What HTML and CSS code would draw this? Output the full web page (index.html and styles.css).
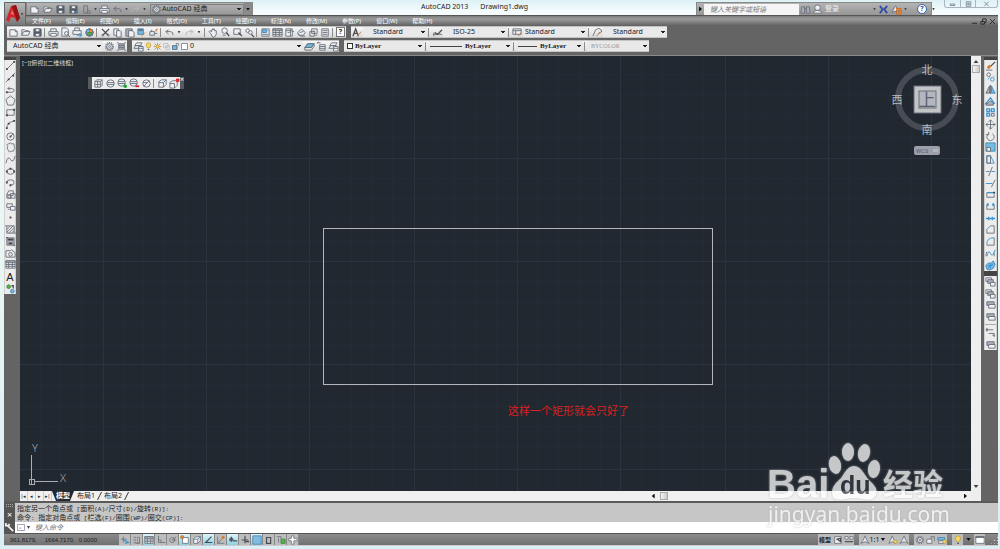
FILE: index.html
```
<!DOCTYPE html>
<html lang="zh-CN">
<head>
  <meta charset="UTF-8">
  <meta name="viewport" content="width=device-width, initial-scale=1.0">
  <title>AutoCAD 2013 - Drawing1.dwg</title>
  <link rel="stylesheet" href="styles.css">
</head>
<body>
  <!-- icon sprite -->
  <svg class="sprite" aria-hidden="true">
    <symbol id="new" viewBox="0 0 12 12"><path class="paper" d="M2 3h6l2 2v5H2z"/><path d="M8 3v2h2"/></symbol>
    <symbol id="open" viewBox="0 0 12 12"><path class="paper" d="M2 9V3h3l1 1h3v2"/><path class="paper" d="M2 9l2-4h7L9 9z"/></symbol>
    <symbol id="save" viewBox="0 0 12 12"><path class="dark" d="M2 2h8v8H2z"/><path class="white" d="M4 2h4v3H4zM4 7h4v3H4z"/></symbol>
    <symbol id="saveas" viewBox="0 0 12 12"><path class="dark" d="M2 2h8v8H2z"/><path class="white" d="M4 2h4v3H4zM4 7h3v3H4z"/><path class="blue" d="M7 10l4-4"/></symbol>
    <symbol id="web" viewBox="0 0 12 12"><path d="M3 2h4v8H3zM7 6l3 2v2H7"/></symbol>
    <symbol id="print" viewBox="0 0 12 12"><path class="paper" d="M3 5V2h6v3"/><path class="paper" d="M1 5h10v4H1z"/><path class="white" d="M3 7h6v3H3z"/></symbol>
    <symbol id="preview" viewBox="0 0 12 12"><path class="paper" d="M2 1h5l2 2v7H2z"/><circle class="paper" cx="7" cy="7" r="2"/><path d="M8 8l3 3"/></symbol>
    <symbol id="publish" viewBox="0 0 12 12"><path class="paper" d="M3 4V1h5v3M1 4h9v4H1z"/><path class="blue" d="M5 9h5M8 7l3 2-3 2"/></symbol>
    <symbol id="cube" viewBox="0 0 12 12"><circle class="bluefill" cx="6" cy="6" r="4"/><path class="orangefill" d="M6 2a4 4 0 0 1 4 4H6z"/><path class="greenfill" d="M4 6h4v3H4z"/><circle cx="6" cy="6" r="4"/></symbol>
    <symbol id="cut" viewBox="0 0 12 12"><path class="thick" d="M2 2l7 7M10 2L3 9"/><circle cx="3" cy="9" r="1"/><circle cx="9" cy="9" r="1"/></symbol>
    <symbol id="copy" viewBox="0 0 12 12"><path class="paper" d="M2 2h5v7H2z"/><path class="paper" d="M5 4h4l1 1v6H5z"/></symbol>
    <symbol id="paste" viewBox="0 0 12 12"><path class="gray" d="M2 2h7v8H2z"/><path class="paper" d="M5 4h4l2 2v5H5z"/></symbol>
    <symbol id="match" viewBox="0 0 12 12"><path class="bluefill" d="M2 2h6v6H2z"/><path class="dark" d="M3 3h4v1H3z"/><path class="orange" d="M6 10l4-4"/></symbol>
    <symbol id="blockedit" viewBox="0 0 12 12"><path d="M2 9V5h5v4zM4 5V3M7 7h3"/><path class="orange" d="M8 4l3-2M9 2v3"/></symbol>
    <symbol id="undo" viewBox="0 0 12 12"><path d="M5 3L2 5l3 3M2 5h5q3 0 3 4"/></symbol>
    <symbol id="redo" viewBox="0 0 12 12"><path class="faint" d="M7 3l3 2-3 3M10 5H5Q2 5 2 9"/></symbol>
    <symbol id="pan" viewBox="0 0 12 12"><path class="paper" d="M3 7L1 5l1-1 2 1V3h1V2h1v1l1-1v2h2v4l-2 3H5z"/></symbol>
    <symbol id="zoomrt" viewBox="0 0 12 12"><circle class="paper" cx="5" cy="4" r="3"/><path class="thick" d="M7 6l3 4"/><path d="M3 9h3"/></symbol>
    <symbol id="zoomwin" viewBox="0 0 12 12"><path class="paper" d="M2 2h7v6H2z"/><path class="thick" d="M7 6l4 4"/></symbol>
    <symbol id="zoomprev" viewBox="0 0 12 12"><circle class="paper" cx="4" cy="4" r="2"/><circle class="paper" cx="7" cy="6" r="2"/><path class="thick" d="M8 8l3 3"/></symbol>
    <symbol id="props" viewBox="0 0 12 12"><path class="paper" d="M2 2h8v8H2z"/><path class="bluefill" d="M3 3h4v3H3z"/><path d="M3 8h6M8 4h1"/></symbol>
    <symbol id="table" viewBox="0 0 12 12"><path class="paper" d="M1 2h10v8H1z"/><path class="gray" d="M1 2h10v2H1z"/><path d="M1 6h10M1 8h10M4 4v6M8 4v6"/></symbol>
    <symbol id="palette" viewBox="0 0 12 12"><path class="paper" d="M2 2h7v8H2z"/><path d="M7 2v8M2 4h7M9 5h2M4 6h2"/></symbol>
    <symbol id="sheet" viewBox="0 0 12 12"><path class="paper" d="M2 6l4-4 4 4-2 3H3z"/><path d="M2 7l3 3h5M4 6l4-1"/></symbol>
    <symbol id="markup" viewBox="0 0 12 12"><path class="paper" d="M4 2h6v5H4z"/><path d="M2 5h5v5H2zM8 9h2M6 4l2 1"/></symbol>
    <symbol id="calc" viewBox="0 0 12 12"><path class="paper" d="M2 2h7v8H2z"/><path d="M3 4h5M3 6h5M3 8h5"/></symbol>
    <symbol id="textstyle" viewBox="0 0 12 12"><path class="thick" d="M1 10l3-8 3 8M2 7h4"/><path class="orange" d="M6 10l4-5"/></symbol>
    <symbol id="dimstyle" viewBox="0 0 12 12"><path d="M1 8h10M2 6v4"/><path class="thick" d="M3 6l3 2 5-5"/><path class="orange" d="M7 8l2-2"/></symbol>
    <symbol id="tablestyle" viewBox="0 0 12 12"><path class="paper" d="M1 2h9v6H1z"/><path d="M1 4h9M4 4v4"/><path class="orange" d="M7 10l3-4"/></symbol>
    <symbol id="leader" viewBox="0 0 12 12"><path d="M1 10l3-7q4-3 6 0T7 7"/><path class="orange" d="M5 10l4-5"/></symbol>
    <symbol id="gear" viewBox="0 0 12 12"><circle class="dots" cx="6" cy="6" r="4"/><circle class="paper" cx="6" cy="6" r="3"/><circle cx="6" cy="6" r="1"/></symbol>
    <symbol id="wsset" viewBox="0 0 12 12"><path class="gray" d="M3 3h6v6H3z"/><path d="M1 2h2M1 10h2M9 2h2M9 10h2M3 5h6M3 7h6"/></symbol>
    <symbol id="layers" viewBox="0 0 12 12"><path class="paper" d="M1 8l2-3h6L7 8zM2 5l2-3h6L8 5z"/><path class="paper" d="M6 6h5v5H6z"/><path d="M6 8h5"/></symbol>
    <symbol id="bulb" viewBox="0 0 12 12"><path class="yellow" d="M3 4a3 3 0 0 1 6 0q0 2-2 4H5Q3 6 3 4z"/><path class="thick" d="M5 10h2"/></symbol>
    <symbol id="sun" viewBox="0 0 12 12"><path class="orange" d="M6 1v10M1 6h10M2 2l8 8M10 2l-8 8"/><circle class="yellow" cx="6" cy="6" r="2"/></symbol>
    <symbol id="freeze" viewBox="0 0 12 12"><path class="faint" d="M2 2h6v5H2zM5 5h5v5H5z"/></symbol>
    <symbol id="lock" viewBox="0 0 12 12"><path class="bluefill" d="M2 5h6v5H2z"/><path d="M2 5h6v5H2zM7 5V2h3v3"/></symbol>
    <symbol id="swatch" viewBox="0 0 12 12"><path class="white" d="M2 2h8v8H2z"/></symbol>
    <symbol id="laycur" viewBox="0 0 12 12"><path class="bluefill" d="M1 7l3-4h7L8 7z"/><path d="M1 7v3h7l3-4V3H4L1 7h7l3-4"/></symbol>
    <symbol id="layprev" viewBox="0 0 12 12"><path class="paper" d="M4 4h6v6H4z"/><path d="M4 6h6M4 8h6M1 2h4M1 2l2-1"/></symbol>
    <symbol id="line" viewBox="0 0 12 12"><path d="M2 10l8-8"/><path class="dot" d="M1 9h2v2H1zM9 1h2v2H9z"/></symbol>
    <symbol id="xline" viewBox="0 0 12 12"><path d="M1 11L11 1"/><path class="dot" d="M3 7h2v2H3zM8 3h2v2H8z"/></symbol>
    <symbol id="pline" viewBox="0 0 12 12"><path d="M2 9h5q3 0 3-2T7 5H3M5 3L3 5l2 1"/><path class="dot" d="M1 8h2v2H1z"/></symbol>
    <symbol id="polygon" viewBox="0 0 12 12"><path d="M6 1l5 4-2 6H3L1 5z"/></symbol>
    <symbol id="rect" viewBox="0 0 12 12"><path d="M2 3h8v6H2z"/><path class="dot" d="M1 8h2v2H1zM9 2h2v2H9z"/></symbol>
    <symbol id="arc" viewBox="0 0 12 12"><path d="M2 10q0-6 8-8"/><path class="dot" d="M1 9h2v2H1zM9 1h2v2H9zM3 4h2v2H3z"/></symbol>
    <symbol id="circle" viewBox="0 0 12 12"><circle cx="6" cy="6" r="4"/><path d="M6 6l3-3"/><path class="dot" d="M5 5h2v2H5z"/></symbol>
    <symbol id="cloud" viewBox="0 0 12 12"><path d="M3 5q-2-3 1-3 2-2 3 0 4-1 3 3 2 2 0 3 0 3-3 2-3 2-3-1-3-1-1-4z"/></symbol>
    <symbol id="spline" viewBox="0 0 12 12"><path d="M1 10Q3 1 6 6t5-4"/></symbol>
    <symbol id="ellipse" viewBox="0 0 12 12"><ellipse cx="6" cy="6" rx="4" ry="3"/><path class="dot" d="M1 5h2v2H1zM9 5h2v2H9zM5 2h2v2H5z"/></symbol>
    <symbol id="earc" viewBox="0 0 12 12"><path d="M2 6q0-3 4-3t4 3-4 3"/><path class="dot" d="M5 8h2v2H5zM1 5h2v2H1z"/></symbol>
    <symbol id="insert" viewBox="0 0 12 12"><path d="M2 6l2-4h5v5H5zM6 5h5v5H6zM2 6v4h5"/><circle cx="5" cy="8" r="2"/></symbol>
    <symbol id="block" viewBox="0 0 12 12"><path d="M2 3h6v4H2z"/><path class="paper" d="M6 6h5v4H6z"/><path d="M3 9h2"/></symbol>
    <symbol id="point" viewBox="0 0 12 12"><path class="dot" d="M5 5h2v2H5z"/></symbol>
    <symbol id="hatch" viewBox="0 0 12 12"><path d="M2 2h8v8H2zM2 6l4-4M2 9l7-7M4 10l6-6M7 10l3-3M1 1v2M11 9v2"/></symbol>
    <symbol id="gradient" viewBox="0 0 12 12"><path class="gray" d="M2 2h8v8H2z"/><path class="dot" d="M3 3h6v2H3zM4 7h4v2H4zM1 1h2v1H1zM9 10h2v1H9z"/></symbol>
    <symbol id="region" viewBox="0 0 12 12"><path d="M1 3h5l1-1 4 3v5H1z"/><circle cx="6" cy="7" r="2"/></symbol>
    <symbol id="addsel" viewBox="0 0 12 12"><circle class="greenfill" cx="4" cy="4" r="2"/><path class="thick" d="M7 3h2v3"/><circle class="bluefill" cx="8" cy="9" r="2"/></symbol>
    <symbol id="erase" viewBox="0 0 12 12"><path class="thick" d="M6 7l5-5"/><path class="orange wide" d="M3 9l3-3"/><path d="M1 11h7"/></symbol>
    <symbol id="mcopy" viewBox="0 0 12 12"><circle cx="4" cy="3" r="2"/><circle class="blue" cx="8" cy="8" r="2"/><path class="blue" d="M3 8l2-2M9 4l1 1"/></symbol>
    <symbol id="mirror" viewBox="0 0 12 12"><path class="gray" d="M5 2v8H1z"/><path class="bluefill" d="M7 2v8h4z"/><path d="M6 1v10"/></symbol>
    <symbol id="offset" viewBox="0 0 12 12"><path class="blue thick" d="M1 8l5-6 4 6z"/><path class="gray" d="M3 8l3-3 3 3v2H1V8z"/></symbol>
    <symbol id="array" viewBox="0 0 12 12"><path class="blue thick" d="M2 2h3v3H2zM7 2h3v3H7zM2 7h3v3H2z"/><path d="M7 7h3v3H7z"/></symbol>
    <symbol id="move" viewBox="0 0 12 12"><path d="M6 1v10M1 6h10M4 3l2-2 2 2M4 9l2 2 2-2M3 4L1 6l2 2M9 4l2 2-2 2"/></symbol>
    <symbol id="rotate" viewBox="0 0 12 12"><path d="M8 3a4 4 0 1 1-4 0M4 1v3H1"/></symbol>
    <symbol id="scale" viewBox="0 0 12 12"><path class="bluefill" d="M1 1h10v9H1z"/><path class="paper" d="M2 6h4v4H2z"/></symbol>
    <symbol id="stretch" viewBox="0 0 12 12"><path class="blue" d="M6 2l4 8H2V2h4"/><path d="M2 2h4v8H2z"/></symbol>
    <symbol id="trim" viewBox="0 0 12 12"><path class="blue" d="M1 6h4M7 6h4"/><path d="M4 11l4-10"/></symbol>
    <symbol id="extend" viewBox="0 0 12 12"><path class="blue" d="M1 6h7"/><path d="M7 10l4-8"/></symbol>
    <symbol id="breakpt" viewBox="0 0 12 12"><path d="M2 4v5h8V6"/><path class="blue thick" d="M2 4h8"/><path class="dot" d="M9 3h2v2H9z"/></symbol>
    <symbol id="break" viewBox="0 0 12 12"><path d="M2 4v5h8V4"/><path class="blue wide" d="M2 4h2M8 4h2"/></symbol>
    <symbol id="join" viewBox="0 0 12 12"><path class="blue thick" d="M1 6h10M4 4v4M8 4v4"/></symbol>
    <symbol id="chamfer" viewBox="0 0 12 12"><path d="M2 10V6M6 2h4v8H2"/><path class="blue" d="M2 6l4-4"/></symbol>
    <symbol id="fillet" viewBox="0 0 12 12"><path d="M2 10V9M9 2h1v8H2"/><path class="blue" d="M2 9q0-7 7-7"/></symbol>
    <symbol id="blend" viewBox="0 0 12 12"><path class="blue" d="M2 9q2-8 4-3t5-4"/><path d="M1 9q0-3 1-5M10 9V5"/></symbol>
    <symbol id="explode" viewBox="0 0 12 12"><path class="bluefill" d="M1 6l3-3 2 1 3-3 2 4-2 4-4 2-3-1z"/><path class="blue" d="M3 6h5M6 3v6M3 9l6-5"/></symbol>
    <symbol id="front" viewBox="0 0 12 12"><path class="paper" d="M1 2h6v4H1z"/><path class="gray" d="M3 4h6v4H3z"/><path class="paper" d="M6 7h5v4H6z"/></symbol>
    <symbol id="above" viewBox="0 0 12 12"><path class="gray" d="M2 3h8v4H2z"/><path class="paper" d="M4 6h7v4H4z"/></symbol>
    <symbol id="anno" viewBox="0 0 12 12"><path d="M2 1v4M1 3h8M3 2L1 3l2 1M4 7h6v4M8 9h3"/></symbol>
    <symbol id="mesh" viewBox="0 0 12 12"><path class="paper" d="M2 4l2-2h6v6l-2 2H2z"/><path d="M2 4h6v6M8 4l2-2M5 3v7M2 7h7"/></symbol>
    <symbol id="ball" viewBox="0 0 12 12"><circle class="paper" cx="6" cy="6" r="4"/><path d="M2 5h8M2 7h8"/></symbol>
    <symbol id="ballplus" viewBox="0 0 12 12"><circle class="paper" cx="5" cy="5" r="4"/><path d="M1 4h8M1 6h8"/><path class="green" d="M9 7v4M7 9h4"/></symbol>
    <symbol id="ballminus" viewBox="0 0 12 12"><circle class="paper" cx="5" cy="5" r="4"/><path d="M1 4h8M1 6h8"/><path class="red" d="M7 9h4"/></symbol>
    <symbol id="ballcut" viewBox="0 0 12 12"><circle class="paper" cx="6" cy="6" r="4"/><path d="M3 9l6-6M2 5h5"/></symbol>
    <symbol id="crease" viewBox="0 0 12 12"><path class="paper" d="M2 4l3-2h5v5l-3 3H2z"/><path d="M2 5h5v5M7 5l3-3"/><path class="blue" d="M7 5l3-3"/></symbol>
    <symbol id="uncrease" viewBox="0 0 12 12"><path class="paper" d="M1 5l3-2h5v5l-3 3H1z"/><path d="M1 6h5v5"/><path class="red" d="M8 1l3 3M11 1L8 4"/></symbol>
    <symbol id="binoc" viewBox="0 0 12 12"><path class="gray" d="M1 10l1-7h3v7zM7 10V3h3l1 7z"/><path d="M5 5h2"/></symbol>
    <symbol id="user" viewBox="0 0 12 12"><circle class="paper" cx="6" cy="4" r="3"/><path class="paper" d="M1 10q1-3 5-3t5 3z"/></symbol>
    <symbol id="exchange" viewBox="0 0 12 12"><path class="navy" d="M2 2l3 4-3 4M10 2L7 6l3 4"/><path class="white" d="M5 3l1 2 1-2"/></symbol>
    <symbol id="a360" viewBox="0 0 12 12"><path class="paper" d="M1 9l4-7 3 5z"/><path class="orangefill" d="M6 5h5v6H6z"/><path class="white" d="M8 7h1v2H8z"/></symbol>
    <symbol id="infer" viewBox="0 0 12 12"><path d="M4 2v7M1 5h7"/><path class="blue thick" d="M5 6l5 3-4 1"/></symbol>
    <symbol id="snap" viewBox="0 0 12 12"><path class="dots" d="M2 3h7M2 6h6M2 9h7"/><path d="M9 3v7H4"/></symbol>
    <symbol id="ortho" viewBox="0 0 12 12"><path d="M3 1v8h8M3 6h3v3"/></symbol>
    <symbol id="polar" viewBox="0 0 12 12"><circle cx="5" cy="6" r="3"/><path d="M5 6l5-4M5 6h5"/></symbol>
    <symbol id="osnap" viewBox="0 0 12 12"><path class="white" d="M3 3h7v7H3z"/><path class="orangefill" d="M1 1h3v3H1z"/></symbol>
    <symbol id="angle" viewBox="0 0 12 12"><path class="thick" d="M9 2L2 9h8"/></symbol>
    <symbol id="ducs" viewBox="0 0 12 12"><path d="M2 2v8h8M2 10l5-5"/><path class="orange wide" d="M7 4l3-2"/></symbol>
    <symbol id="plus" viewBox="0 0 12 12"><path class="thick" d="M6 1v9M2 6h8M7 8h4"/></symbol>
    <symbol id="dyn" viewBox="0 0 12 12"><path class="dark" d="M2 4h4v3H2z"/><path class="thick" d="M4 2v6M6 7h5"/></symbol>
    <symbol id="tpy" viewBox="0 0 12 12"><path class="bluefill" d="M1 1h10v10H1z"/><path class="dots faint" d="M2 3h8M2 6h8M2 9h8"/></symbol>
    <symbol id="qp" viewBox="0 0 12 12"><path class="thick" d="M3 3h5v7H3z"/></symbol>
    <symbol id="sc" viewBox="0 0 12 12"><path d="M1 2h5v3M3 4v5"/><path class="greenfill" d="M6 5h5v5H6z"/></symbol>
    <symbol id="am" viewBox="0 0 12 12"><path class="white" d="M4 1h3v3h4v3H7v4H4V7H1V4h3z"/></symbol>
    <symbol id="layout" viewBox="0 0 12 12"><path class="paper" d="M2 2h8v8H2z"/><path class="thick" d="M5 5l4-1v4z"/></symbol>
    <symbol id="quick" viewBox="0 0 12 12"><path class="paper" d="M1 2h4v3H1zM7 2h4v3H7z"/><path class="thick" d="M1 8h10"/></symbol>
    <symbol id="scaleicon" viewBox="0 0 12 12"><path class="paper" d="M6 1l2 5 3 4-5-2-5 2 3-4z"/></symbol>
    <symbol id="annovis" viewBox="0 0 12 12"><path class="paper" d="M5 1l2 5 2 4-4-2-4 2 2-4z"/><circle class="yellow" cx="9" cy="8" r="2"/></symbol>
    <symbol id="padlock" viewBox="0 0 12 12"><path class="paper" d="M1 5h6v5H1z"/><path d="M6 5V2h4v5"/></symbol>
    <symbol id="hardware" viewBox="0 0 12 12"><path class="bluefill" d="M1 3h8v3H1z"/><path class="paper" d="M2 7h6v3H2z"/><circle class="yellow" cx="9" cy="8" r="2"/></symbol>
    <symbol id="clean" viewBox="0 0 12 12"><path class="white" d="M1 2h10v8H1z"/><path class="dark" d="M1 2h10v1H1z"/></symbol>
    <symbol id="wrench" viewBox="0 0 12 12"><path class="light" d="M4 4l6 6"/><path class="light" d="M2 1v3h3l1-2"/></symbol>
  </svg>

  <div class="window">
    <header class="header">
      <button class="app-button" aria-label="应用程序">
        <svg class="app-logo" viewBox="0 0 14 18"><path fill="#d3262b" d="M0 15L5 1l5-1 4 13-3 4-2-4-4-1-2 5z"/><path fill="#8d1417" d="M6 1l4-1 4 13-3 4-3-10z"/><path fill="#f0787a" d="M5 9l1-4 2 5z"/></svg>
        <i class="caret"></i>
      </button>
      <div class="header-main">
        <div class="titlebar">
          <div class="quick-access">
            <button aria-label="新建"><svg><use href="#new"/></svg></button>
            <button aria-label="打开"><svg><use href="#open"/></svg></button>
            <button aria-label="保存"><svg><use href="#save"/></svg></button>
            <button aria-label="另存为"><svg><use href="#saveas"/></svg></button>
            <button aria-label="Web"><svg><use href="#web"/></svg></button>
            <i class="caret"></i>
            <button aria-label="打印"><svg><use href="#print"/></svg></button>
            <button aria-label="放弃"><svg><use href="#undo"/></svg></button>
            <i class="caret"></i>
            <button aria-label="重做"><svg><use href="#redo"/></svg></button>
            <i class="caret"></i>
            <label class="workspace"><svg><use href="#gear"/></svg>
              <select aria-label="工作空间"><option>AutoCAD 经典</option></select>
            </label>
            <button class="more" aria-label="自定义"><i class="caret dark-caret"></i></button>
          </div>
          <h1 class="title"><span>AutoCAD 2013</span><span>Drawing1.dwg</span></h1>
          <div class="infocenter">
            <button class="expand" aria-label="展开"><i class="caret right"></i></button>
            <input type="search" aria-label="搜索" placeholder="键入关键字或短语">
            <button aria-label="查找"><svg><use href="#binoc"/></svg></button>
            <button class="login"><svg><use href="#user"/></svg>登录</button>
            <i class="caret"></i>
            <button aria-label="Exchange"><svg><use href="#exchange"/></svg></button>
            <button aria-label="在线"><svg><use href="#a360"/></svg></button>
            <i class="caret"></i>
            <button class="help-button">?</button>
            <i class="caret"></i>
          </div>
          <div class="window-controls">
            <button aria-label="最小化"><svg viewBox="0 0 8 8"><path d="M1 4h6v2H1z"/></svg></button>
            <button aria-label="最大化"><svg viewBox="0 0 8 8"><path d="M1 1h6v6H1zM3 3h2v2H3z"/></svg></button>
            <button aria-label="关闭"><svg viewBox="0 0 8 8"><path d="M1 1l6 6M7 1L1 7"/></svg></button>
          </div>
        </div>
        <nav class="menubar">
          <a href="#">文件(F)</a>
          <a href="#">编辑(E)</a>
          <a href="#">视图(V)</a>
          <a href="#">插入(I)</a>
          <a href="#">格式(O)</a>
          <a href="#">工具(T)</a>
          <a href="#">绘图(D)</a>
          <a href="#">标注(N)</a>
          <a href="#">修改(M)</a>
          <a href="#">参数(P)</a>
          <a href="#">窗口(W)</a>
          <a href="#">帮助(H)</a>
          <div class="doc-controls">
            <button aria-label="最小化"><svg viewBox="0 0 8 8"><path d="M1 6h6"/></svg></button>
            <button aria-label="还原"><svg viewBox="0 0 8 8"><path d="M1 4h4v3H1zM3 4V1h4v4H5"/></svg></button>
            <button aria-label="关闭"><svg viewBox="0 0 8 8"><path d="M1 1l6 6M7 1L1 7"/></svg></button>
          </div>
        </nav>
      </div>
    </header>

    <div class="toolbars">
      <div class="toolbar-row">
        <div class="toolbar">
          <button aria-label="新建"><svg><use href="#new"/></svg></button>
          <button aria-label="打开"><svg><use href="#open"/></svg></button>
          <button aria-label="保存"><svg><use href="#save"/></svg></button>
          <i class="sep"></i>
          <button aria-label="打印"><svg><use href="#print"/></svg></button>
          <button aria-label="打印预览"><svg><use href="#preview"/></svg></button>
          <button aria-label="发布"><svg><use href="#publish"/></svg></button>
          <button aria-label="三维DWF"><svg><use href="#cube"/></svg></button>
          <i class="sep"></i>
          <button aria-label="剪切"><svg><use href="#cut"/></svg></button>
          <button aria-label="复制"><svg><use href="#copy"/></svg></button>
          <button aria-label="粘贴"><svg><use href="#paste"/></svg></button>
          <button aria-label="特性匹配"><svg><use href="#match"/></svg></button>
          <button aria-label="块编辑器"><svg><use href="#blockedit"/></svg></button>
          <i class="sep"></i>
          <button aria-label="放弃"><svg><use href="#undo"/></svg></button>
          <i class="caret wide-caret"></i>
          <button aria-label="重做"><svg><use href="#redo"/></svg></button>
          <i class="caret wide-caret"></i>
          <i class="sep"></i>
          <button aria-label="平移"><svg><use href="#pan"/></svg></button>
          <button aria-label="实时缩放"><svg><use href="#zoomrt"/></svg></button>
          <button aria-label="窗口缩放"><svg><use href="#zoomwin"/></svg></button>
          <button aria-label="缩放上一个"><svg><use href="#zoomprev"/></svg></button>
          <i class="sep"></i>
          <button aria-label="特性"><svg><use href="#props"/></svg></button>
          <button aria-label="设计中心"><svg><use href="#table"/></svg></button>
          <button aria-label="工具选项板"><svg><use href="#palette"/></svg></button>
          <button aria-label="图纸集"><svg><use href="#sheet"/></svg></button>
          <button aria-label="标记集"><svg><use href="#markup"/></svg></button>
          <button aria-label="计算器"><svg><use href="#calc"/></svg></button>
          <i class="sep"></i>
          <button class="boxed">?</button>
        </div>
        <div class="toolbar styles-bar">
          <button aria-label="文字样式"><svg><use href="#textstyle"/></svg></button>
          <select class="indent" aria-label="文字样式"><option>Standard</option></select>
          <i class="sep"></i>
          <button aria-label="标注样式"><svg><use href="#dimstyle"/></svg></button>
          <select class="indent" aria-label="标注样式"><option>ISO-25</option></select>
          <i class="sep"></i>
          <button aria-label="表格样式"><svg><use href="#tablestyle"/></svg></button>
          <select aria-label="表格样式"><option>Standard</option></select>
          <i class="sep"></i>
          <button aria-label="多重引线样式"><svg><use href="#leader"/></svg></button>
          <select class="indent" aria-label="多重引线样式"><option>Standard</option></select>
        </div>
      </div>
      <div class="toolbar-row">
        <div class="toolbar">
          <select class="workspace-select" aria-label="工作空间"><option>AutoCAD 经典</option></select>
          <button aria-label="工作空间设置"><svg><use href="#gear"/></svg></button>
          <button aria-label="我的工作空间"><svg><use href="#wsset"/></svg></button>
        </div>
        <div class="toolbar">
          <button aria-label="图层特性"><svg><use href="#layers"/></svg></button>
          <label class="layer-combo">
            <svg><use href="#bulb"/></svg><svg><use href="#sun"/></svg><svg><use href="#freeze"/></svg><svg><use href="#lock"/></svg><svg><use href="#swatch"/></svg>
            <select aria-label="图层"><option>0</option></select>
          </label>
          <button aria-label="置为当前"><svg><use href="#laycur"/></svg></button>
          <button aria-label="上一个图层"><svg><use href="#layprev"/></svg></button>
          <button aria-label="图层状态"><svg><use href="#layers"/></svg></button>
        </div>
        <div class="toolbar props-bar">
          <label class="color-combo"><i class="color-box"></i><select aria-label="颜色"><option>ByLayer</option></select></label>
          <i class="sep"></i>
          <label class="linetype-combo"><i class="stroke"></i><select aria-label="线型"><option>ByLayer</option></select></label>
          <i class="sep"></i>
          <label class="weight-combo"><i class="stroke"></i><select aria-label="线宽"><option>ByLayer</option></select></label>
          <i class="sep"></i>
          <select class="plot-select" aria-label="打印样式" disabled><option>BYCOLOR</option></select>
        </div>
      </div>
    </div>

    <main class="workarea">
      <aside class="side draw-side">
        <i class="grip"></i>
        <div class="palette draw-palette">
          <button aria-label="直线"><svg><use href="#line"/></svg></button>
          <button aria-label="构造线"><svg><use href="#xline"/></svg></button>
          <button aria-label="多段线"><svg><use href="#pline"/></svg></button>
          <button aria-label="多边形"><svg><use href="#polygon"/></svg></button>
          <button aria-label="矩形"><svg><use href="#rect"/></svg></button>
          <button aria-label="圆弧"><svg><use href="#arc"/></svg></button>
          <button aria-label="圆"><svg><use href="#circle"/></svg></button>
          <button aria-label="修订云线"><svg><use href="#cloud"/></svg></button>
          <button aria-label="样条曲线"><svg><use href="#spline"/></svg></button>
          <button aria-label="椭圆"><svg><use href="#ellipse"/></svg></button>
          <button aria-label="椭圆弧"><svg><use href="#earc"/></svg></button>
          <button aria-label="插入块"><svg><use href="#insert"/></svg></button>
          <button aria-label="创建块"><svg><use href="#block"/></svg></button>
          <button aria-label="点"><svg><use href="#point"/></svg></button>
          <button aria-label="图案填充"><svg><use href="#hatch"/></svg></button>
          <button aria-label="渐变色"><svg><use href="#gradient"/></svg></button>
          <button aria-label="面域"><svg><use href="#region"/></svg></button>
          <button aria-label="表格"><svg><use href="#table"/></svg></button>
          <button class="mtext">A</button>
          <button aria-label="添加选定对象"><svg><use href="#addsel"/></svg></button>
        </div>
      </aside>

      <section class="document">
        <div class="canvas">
          <svg class="drawing">
            <defs>
              <pattern id="grid" x="82" y="101" width="311" height="311" patternUnits="userSpaceOnUse">
                <path class="minor" d="M21 0v311M41 0v311M62 0v311M83 0v311M124 0v311M145 0v311M166 0v311M187 0v311M228 0v311M249 0v311M269 0v311M290 0v311M0 21h311M0 41h311M0 62h311M0 83h311M0 124h311M0 145h311M0 166h311M0 187h311M0 228h311M0 249h311M0 269h311M0 290h311"/>
                <path class="major" d="M1 0v311M104 0v311M207 0v311M0 1h311M0 104h311M0 207h311"/>
              </pattern>
            </defs>
            <rect width="100%" height="100%" fill="url(#grid)"/>
            <rect class="shape" x="303" y="172" width="389" height="156"/>
          </svg>
          <p class="view-label">[−][俯视][二维线框]</p>
          <div class="mesh-toolbar">
            <i class="handle"></i>
            <button aria-label="网格"><svg><use href="#mesh"/></svg></button>
            <button aria-label="平滑对象"><svg><use href="#ball"/></svg></button>
            <button aria-label="提高平滑度"><svg><use href="#ballplus"/></svg></button>
            <button aria-label="降低平滑度"><svg><use href="#ballminus"/></svg></button>
            <button aria-label="优化网格"><svg><use href="#ballcut"/></svg></button>
            <i class="sep"></i>
            <button aria-label="添加锐化"><svg><use href="#crease"/></svg></button>
            <button aria-label="删除锐化"><svg><use href="#uncrease"/></svg></button>
            <button class="close" aria-label="关闭">×</button>
          </div>
          <div class="viewcube">
            <svg viewBox="0 0 76 84">
              <circle cx="38" cy="39" r="29" fill="none" stroke="#464b54" stroke-width="6"/>
              <rect x="25" y="26" width="27" height="27" fill="#c3c4c5"/>
              <rect x="30" y="31" width="17" height="17" fill="#b2b6be"/>
              <text class="cube-face" x="38" y="46">上</text>
              <text x="38" y="14">北</text>
              <text x="8" y="44">西</text>
              <text x="68" y="44">东</text>
              <text x="38" y="74">南</text>
            </svg>
            <button class="wcs">WCS<i></i></button>
          </div>
          <p class="note">这样一个矩形就会只好了</p>
          <svg class="ucs" viewBox="0 0 44 52">
            <path d="M5 19v29M8 45h24M3 43h5v5H3z"/>
            <text x="6" y="16">Y</text>
            <text x="34" y="46">X</text>
          </svg>
        </div>
        <div class="vscroll">
          <i class="caret up"></i>
          <i class="thumb"></i>
          <i class="caret down"></i>
        </div>
        <div class="layout-row">
          <div class="tab-nav">
            <button>|◂</button><button>◂</button><button>▸</button><button>▸|</button>
          </div>
          <button class="tab active">模型</button>
          <button class="tab">布局1</button><i class="slash"></i>
          <button class="tab">布局2</button><i class="slash"></i>
          <div class="hscroll">
            <i class="caret left"></i>
            <i class="thumb"></i>
            <i class="caret right"></i>
          </div>
        </div>
      </section>

      <aside class="side modify-side">
        <i class="grip"></i>
        <div class="palette modify-palette">
          <button aria-label="删除"><svg><use href="#erase"/></svg></button>
          <button aria-label="复制"><svg><use href="#mcopy"/></svg></button>
          <button aria-label="镜像"><svg><use href="#mirror"/></svg></button>
          <button aria-label="偏移"><svg><use href="#offset"/></svg></button>
          <button aria-label="阵列"><svg><use href="#array"/></svg></button>
          <button aria-label="移动"><svg><use href="#move"/></svg></button>
          <button aria-label="旋转"><svg><use href="#rotate"/></svg></button>
          <button aria-label="缩放"><svg><use href="#scale"/></svg></button>
          <button aria-label="拉伸"><svg><use href="#stretch"/></svg></button>
          <button aria-label="修剪"><svg><use href="#trim"/></svg></button>
          <button aria-label="延伸"><svg><use href="#extend"/></svg></button>
          <button aria-label="打断于点"><svg><use href="#breakpt"/></svg></button>
          <button aria-label="打断"><svg><use href="#break"/></svg></button>
          <button aria-label="合并"><svg><use href="#join"/></svg></button>
          <button aria-label="倒角"><svg><use href="#chamfer"/></svg></button>
          <button aria-label="圆角"><svg><use href="#fillet"/></svg></button>
          <button aria-label="光顺曲线"><svg><use href="#blend"/></svg></button>
          <button aria-label="分解"><svg><use href="#explode"/></svg></button>
        </div>
        <i class="grip second"></i>
        <div class="palette order-palette">
          <button aria-label="前置"><svg><use href="#front"/></svg></button>
          <button aria-label="后置"><svg><use href="#front"/></svg></button>
          <button aria-label="置于对象之上"><svg><use href="#above"/></svg></button>
          <button aria-label="置于对象之下"><svg><use href="#above"/></svg></button>
          <i class="hsep"></i>
          <button aria-label="注释前置"><svg><use href="#anno"/></svg></button>
          <button aria-label="图案填充后置"><svg><use href="#above"/></svg></button>
        </div>
      </aside>
    </main>

    <section class="command">
      <div class="command-handle">
        <i class="handle-dots"></i>
        <button aria-label="关闭">×</button>
        <button aria-label="自定义"><svg><use href="#wrench"/></svg></button>
      </div>
      <div class="command-body">
        <div class="history">
          <p>指定另一个角点或<code> [</code>面积<code>(A)/</code>尺寸<code>(D)/</code>旋转<code>(R)]:</code></p>
          <p>命令<code>: </code>指定对角点或<code> [</code>栏选<code>(F)/</code>圈围<code>(WP)/</code>圈交<code>(CP)]:</code></p>
        </div>
        <div class="prompt">
          <button class="prompt-icon">&gt;_</button>
          <i class="caret"></i>
          <input type="text" aria-label="命令" placeholder="键入命令">
        </div>
      </div>
    </section>

    <footer class="statusbar">
      <div class="coords"><span>961.8179,</span><span>1664.7170,</span><span>0.0000</span></div>
      <div class="toggles">
        <button aria-label="推断约束"><svg><use href="#infer"/></svg></button>
        <button aria-label="捕捉"><svg><use href="#snap"/></svg></button>
        <button class="on" aria-label="栅格"><svg><use href="#table"/></svg></button>
        <button aria-label="正交"><svg><use href="#ortho"/></svg></button>
        <button aria-label="极轴"><svg><use href="#polar"/></svg></button>
        <button class="on" aria-label="对象捕捉"><svg><use href="#osnap"/></svg></button>
        <button aria-label="三维对象捕捉"><svg><use href="#crease"/></svg></button>
        <button class="on" aria-label="对象追踪"><svg><use href="#angle"/></svg></button>
        <button aria-label="动态UCS"><svg><use href="#ducs"/></svg></button>
        <button class="on" aria-label="动态输入"><svg><use href="#dyn"/></svg></button>
        <button aria-label="线宽"><svg><use href="#plus"/></svg></button>
        <button class="on" aria-label="透明度"><svg><use href="#tpy"/></svg></button>
        <button aria-label="快捷特性"><svg><use href="#qp"/></svg></button>
        <button aria-label="选择循环"><svg><use href="#sc"/></svg></button>
        <button aria-label="注释监视器"><svg><use href="#am"/></svg></button>
      </div>
      <div class="status-right">
        <div class="group">
          <button class="text-button">模型</button>
          <button aria-label="布局"><svg><use href="#layout"/></svg></button>
          <button aria-label="快速查看"><svg><use href="#quick"/></svg></button>
        </div>
        <div class="group">
          <button class="anno-scale"><svg><use href="#scaleicon"/></svg>1:1<i class="caret dark-caret"></i></button>
          <button aria-label="注释可见性"><svg><use href="#annovis"/></svg></button>
          <button aria-label="自动添加比例"><svg><use href="#scaleicon"/></svg></button>
        </div>
        <div class="group">
          <button aria-label="切换工作空间"><svg><use href="#gear"/></svg></button>
          <button aria-label="锁定"><svg><use href="#padlock"/></svg></button>
          <button aria-label="硬件加速"><svg><use href="#hardware"/></svg></button>
        </div>
        <div class="group last">
          <button aria-label="隔离对象"><svg><use href="#bulb"/></svg></button>
          <i class="caret dark-caret"></i>
          <button aria-label="全屏显示"><svg><use href="#clean"/></svg></button>
        </div>
        <i class="resize"></i>
      </div>
    </footer>
  </div>

  <svg class="watermark" viewBox="0 0 190 96">
    <text class="wm-brand" x="2" y="60">Bai</text>
    <g class="wm-paw">
      <ellipse cx="83" cy="14" rx="6" ry="9"/>
      <ellipse cx="99" cy="15" rx="6" ry="9" transform="rotate(12 99 15)"/>
      <ellipse cx="70" cy="27" rx="6" ry="9" transform="rotate(-12 70 27)"/>
      <ellipse cx="109" cy="31" rx="6" ry="9" transform="rotate(8 109 31)"/>
      <path d="M89 28q5 0 9 6 4 7 10 12 7 8 1 14-4 3-12 1-8-2-16 0-10 2-13-2-3-7 3-14 6-5 9-11 4-6 9-6z"/>
    </g>
    <text class="wm-du" x="75" y="56">du</text>
    <text class="wm-cn" x="118" y="57">经验</text>
    <text class="wm-url" x="3" y="84">jingyan.baidu.com</text>
  </svg>
</body>
</html>
```

FILE: styles.css
```
* {
  box-sizing: border-box;
}
body {
  margin: 0;
  min-height: 100vh;
  display: flex;
  flex-direction: column;
  position: relative;
  font-family: "Noto Sans", "Noto Sans CJK SC", sans-serif;
  font-size: 7px;
  line-height: 10px;
  color: #222;
  background: linear-gradient(#dcf1f6, #f6fcfd 12px, #f2fafa 60px, #e6f4f3 60%, #dceef6);
  overflow: hidden;
}
p, h1 {
  margin: 0;
}
button, input, select {
  font: inherit;
  color: inherit;
  margin: 0;
  padding: 0;
  border: 0;
  border-radius: 0;
  background: none;
}
button {
  display: flex;
  align-items: center;
  justify-content: center;
  flex: none;
}
select {
  appearance: none;
  min-width: 0;
}
.sprite {
  position: absolute;
  width: 0;
  height: 0;
}

/* icons */
svg {
  display: block;
  flex: none;
  fill: none;
  stroke: #6a717c;
}
button svg, label svg {
  width: 11px;
  height: 11px;
}
.paper { fill: #eef0f3; }
.white { fill: #fff; }
.gray { fill: #a9b0b8; }
.dark { fill: #4d5663; }
.dot { fill: #444; stroke: none; }
.thick { stroke: #484d55; stroke-width: 1.4; }
.faint { stroke: #b4b7bb; }
.light { stroke: #eee; stroke-width: 2; }
.dots { stroke-dasharray: 1 1; stroke-width: 2; }
.blue { stroke: #3794d0; }
.navy { stroke: #2e4fa5; stroke-width: 2; }
.red { stroke: #dc2424; stroke-width: 2; }
.green { stroke: #1faa2c; stroke-width: 2; }
.orange { stroke: #d77a2c; }
.wide { stroke-width: 3; }
.bluefill { fill: #77bbe8; stroke: #4585ae; }
.greenfill { fill: #5cb052; stroke: #3f8a3a; }
.orangefill { fill: #ee8d3b; stroke: #c76c20; }
.yellow { fill: #fbdb62; stroke: #b79a3f; }

.caret {
  flex: none;
  width: 5px;
  height: 3px;
  background: #444;
  clip-path: polygon(20% 0, 80% 0, 50% 100%);
}
.wide-caret {
  width: 8px;
  clip-path: polygon(30% 0, 70% 0, 50% 100%);
}
.dark-caret {
  width: 7px;
  background: #111;
}
.caret.right, .caret.left {
  width: 3px;
  height: 5px;
  background: #111;
  clip-path: polygon(0 0, 100% 50%, 0 100%);
}
.caret.left { clip-path: polygon(100% 0, 0 50%, 100% 100%); }
.caret.up { clip-path: polygon(50% 0, 100% 100%, 0 100%); }
.caret.down { clip-path: polygon(0 0, 100% 0, 50% 100%); }

.window {
  flex: 1;
  display: flex;
  flex-direction: column;
  margin: 0 2px 3px 4px;
}

/* title and menu */
.header {
  display: flex;
}
.app-button {
  width: 22px;
  margin-top: 2px;
  background: linear-gradient(#b8b8b8, #777);
  border: 1px solid #666;
}
.app-logo {
  width: 14px;
  height: 18px;
  stroke: none;
}
.app-button .caret {
  width: 5px;
}
.header-main {
  flex: 1;
  min-width: 0;
}
.titlebar {
  display: flex;
  height: 15px;
}
.quick-access, .infocenter {
  display: flex;
  align-items: center;
  flex: none;
  height: 13px;
  margin-top: 2px;
  background: linear-gradient(#b4b4b4, #969696);
  border: 1px solid #888;
  border-bottom: 0;
}
.quick-access {
  padding-left: 1px;
}
.quick-access button {
  width: 13px;
}
.workspace {
  display: flex;
  align-items: center;
  width: 94px;
  height: 11px;
  margin-left: 3px;
  border: 1px solid #808080;
}
.workspace select {
  flex: 1;
}
.quick-access .more {
  width: 8px;
  height: 12px;
  background: #8a8a8a;
}
.title {
  display: flex;
  justify-content: center;
  flex: 1;
  gap: 12px;
  font-size: 7px;
  font-weight: 400;
  line-height: 13px;
}
.infocenter {
  width: 236px;
  margin-right: 12px;
}
.infocenter .expand {
  width: 7px;
}
.infocenter input {
  width: 95px;
  height: 11px;
  padding-left: 6px;
  background: #f5f5f5;
}
.infocenter input::placeholder, .prompt input::placeholder {
  color: #777;
  font-style: italic;
  opacity: 1;
}
.infocenter button {
  width: 13px;
}
.infocenter .login {
  width: 60px;
  justify-content: flex-start;
  gap: 2px;
  color: #eee;
}
.infocenter .help-button {
  width: 10px;
  height: 10px;
  margin: 0 4px 0 9px;
  border: 1px solid #3465a8;
  border-radius: 50%;
  background: #fff;
  color: #1c55a8;
  font-weight: 700;
}
.window-controls {
  display: flex;
  flex: none;
  height: 8px;
  border: 1px solid #a7b6bc;
  border-top: 0;
  border-radius: 0 0 3px 3px;
}
.window-controls button {
  width: 15px;
}
.window-controls button + button {
  border-left: 1px solid #a7b6bc;
}
.window-controls button:last-child {
  width: 22px;
}
.window-controls svg {
  width: 7px;
  height: 6px;
}
.menubar {
  display: flex;
  align-items: center;
  gap: 15px;
  height: 11px;
  padding-left: 6px;
  background: linear-gradient(#7c7c7c, #9b9b9b 30%, #606060);
  border-top: 1px solid #555;
}
.menubar a {
  font-size: 6px;
  color: #fff;
  text-decoration: none;
}
.doc-controls {
  display: flex;
  gap: 2px;
  margin-left: auto;
  margin-right: 2px;
}
.doc-controls svg {
  width: 7px;
  height: 7px;
  stroke: #222;
}

/* toolbars */
.toolbars {
  display: flex;
  flex-direction: column;
  gap: 2px;
  padding: 0 3px 3px;
  background: #646464;
  border-bottom: 1px solid #8b8b8b;
}
.toolbar-row {
  display: flex;
  gap: 5px;
}
.toolbar {
  display: flex;
  align-items: center;
  height: 12px;
  background: linear-gradient(#f7f7f7, #dcdcdc);
  border: 1px solid #c4c4c4;
  border-width: 1px 0;
}
.toolbar button {
  width: 12px;
  height: 10px;
}
.sep {
  flex: none;
  width: 4px;
  height: 9px;
  background: linear-gradient(90deg, transparent 1px, #8b8b8b 1px 2px, transparent 2px);
}
.toolbar .boxed {
  width: 9px;
  margin: 0 1px;
  border: 1px solid #777;
  background: #fff;
  font-weight: 700;
}
.toolbar select, .layer-combo, .props-bar label {
  height: 10px;
  background-color: #e9e9e9;
}
/* drop-down triangle */
.toolbar select, .workspace select {
  background-image: linear-gradient(#222, #222), linear-gradient(#222, #222);
  background-size: 4px 1px, 2px 1px;
  background-position: right 2px top 4px, right 3px top 5px;
  background-repeat: no-repeat;
}
.styles-bar select {
  width: 64px;
  padding-left: 2px;
}
.styles-bar .indent {
  padding-left: 10px;
}
.workspace-select {
  width: 96px;
  padding-left: 6px;
}
.layer-combo, .props-bar label {
  display: flex;
  align-items: center;
}
.layer-combo {
  width: 159px;
}
.layer-combo svg {
  width: 9px;
  height: 9px;
}
.layer-combo select {
  flex: 1;
  padding-left: 1px;
}
.props-bar {
  font-family: "Liberation Serif", serif;
  font-weight: 700;
}
.props-bar select {
  flex: 1;
}
.color-combo {
  width: 80px;
}
.color-box {
  width: 6px;
  height: 6px;
  margin: 0 2px 0 3px;
  background: #fff;
  border: 1px solid #333;
}
.linetype-combo {
  width: 84px;
}
.weight-combo {
  width: 67px;
}
.stroke {
  width: 32px;
  height: 1px;
  margin: 0 3px 0 2px;
  background: #444;
}
.weight-combo .stroke {
  width: 19px;
}
.toolbar .plot-select {
  flex: none;
  width: 62px;
  padding-left: 4px;
  color: #999;
  font-weight: 400;
  font-size: 6px;
  opacity: 1;
}

/* work area */
.workarea {
  flex: 1;
  display: flex;
  min-height: 0;
  background: #646464;
}
.side {
  display: flex;
  flex-direction: column;
  flex: none;
  padding-top: 1px;
}
.draw-side {
  width: 12px;
  margin-right: 4px;
}
.modify-side {
  width: 13px;
  margin: 0 1px 0 3px;
}
.grip {
  height: 3px;
  background: #444;
}
.grip.second {
  height: 5px;
}
.palette {
  display: flex;
  flex-direction: column;
  background: #ececec;
  border: 1px solid #d0d0d0;
  border-width: 0 1px;
}
.palette button {
  flex: 1;
}
.draw-palette {
  height: 234px;
}
.modify-palette {
  height: 211px;
}
.order-palette {
  height: 74px;
}
.hsep {
  height: 1px;
  margin: 2px 0;
  background: #aaa;
}
.palette .mtext {
  font-family: "Liberation Sans", sans-serif;
  font-size: 11px;
}
.document {
  flex: 1;
  display: grid;
  grid-template-columns: 1fr 10px;
  grid-template-rows: 1fr 10px;
  min-width: 0;
}
.canvas {
  position: relative;
  overflow: hidden;
  background: #212830;
}
.drawing {
  position: absolute;
  width: 100%;
  height: 100%;
  shape-rendering: crispEdges;
  stroke: none;
}
.minor { stroke: #242b34; }
.major { stroke: #2b333e; }
.shape { stroke: #b4b6b9; }
.view-label {
  position: absolute;
  top: 2px;
  left: 2px;
  font-size: 6px;
  color: #ddd;
}
.mesh-toolbar {
  position: absolute;
  top: 21px;
  left: 68px;
  display: flex;
  align-items: center;
  height: 12px;
  background: #ececec;
}
.mesh-toolbar button {
  width: 12px;
}
.mesh-toolbar .handle {
  width: 4px;
  height: 12px;
  background: #555b61;
}
.mesh-toolbar .close {
  align-items: flex-start;
  width: 4px;
  height: 12px;
  background: #555b61;
  color: #fff;
  line-height: 6px;
}
.viewcube {
  position: absolute;
  top: 4px;
  right: 6px;
  width: 76px;
  display: flex;
  flex-direction: column;
  align-items: center;
}
.viewcube svg {
  width: 76px;
  height: 84px;
}
.viewcube text {
  fill: #b9bbbd;
  stroke: none;
  font-size: 11px;
  text-anchor: middle;
}
.viewcube .cube-face {
  fill: #5a6069;
  font-size: 17px;
}
.wcs {
  width: 26px;
  height: 9px;
  margin-top: 2px;
  gap: 5px;
  border-radius: 2px;
  background: #9da0ac;
  color: #555b68;
  font-size: 6px;
}
.wcs i {
  width: 5px;
  height: 3px;
  background: #b3b5bf;
}
.note {
  position: absolute;
  top: 347px;
  left: 488px;
  font-size: 11px;
  line-height: 16px;
  color: #dd2020;
}
.ucs {
  position: absolute;
  left: 6px;
  bottom: 3px;
  width: 44px;
  height: 52px;
  stroke: #aaadb1;
}
.ucs path {
  shape-rendering: crispEdges;
}
.ucs text {
  fill: #aaadb1;
  stroke: none;
  font-size: 11px;
  font-weight: 300;
}
.vscroll {
  grid-row: span 2;
  display: flex;
  flex-direction: column;
  align-items: center;
  padding: 4px 0 13px;
  background: #eee;
}
.thumb {
  width: 8px;
  height: 8px;
  background: linear-gradient(90deg, #f5f5f5, #c8c8c8);
  border: 1px solid #aaa;
}
.vscroll .thumb {
  margin: 2px 0 auto;
}
.layout-row {
  display: flex;
  align-items: center;
  background: #f0f0f0;
}
.tab-nav {
  display: flex;
}
.tab-nav button {
  width: 8px;
  font-size: 5px;
  border-right: 1px solid #ccc;
}
.tab {
  padding: 0 2px;
  height: 10px;
}
.tab.active {
  width: 22px;
  margin-right: 1px;
  background: #212830;
  color: #fff;
  font-weight: 700;
  clip-path: polygon(0 0, 100% 0, 82% 100%, 18% 100%);
}
.slash {
  width: 5px;
  height: 8px;
  background: #333;
  clip-path: polygon(80% 0, 100% 0, 20% 100%, 0 100%);
}
.hscroll {
  display: flex;
  align-items: center;
  width: 34%;
  margin-left: auto;
  padding: 0 4px;
}
.hscroll .thumb {
  margin: 0 auto 0 5px;
}

/* command line */
.command {
  display: flex;
  background: #c6c6c6;
  border-top: 2px solid #5a5a5a;
}
.command-handle {
  display: flex;
  flex-direction: column;
  align-items: center;
  justify-content: space-between;
  width: 11px;
  padding: 1px 0;
  background: #555;
  color: #fff;
}
.handle-dots {
  width: 7px;
  height: 3px;
  border: 1px dotted #aaa;
  border-width: 1px 0;
}
.command-handle button {
  font-size: 9px;
  height: 10px;
}
.command-body {
  flex: 1;
}
.history {
  padding: 1px 2px 0;
}
.history p {
  height: 9px;
  line-height: 9px;
}
.history code {
  font-family: "Liberation Mono", monospace;
  font-size: 6px;
  white-space: pre;
}
.prompt {
  display: flex;
  align-items: center;
  height: 11px;
  padding-left: 2px;
  background: #fff;
}
.prompt input {
  flex: 1;
  padding-left: 4px;
}
.prompt-icon {
  width: 8px;
  height: 7px;
  margin-right: 1px;
  border: 1px solid #aab;
  font-size: 5px;
  color: #567;
}

/* status bar */
.statusbar {
  display: flex;
  align-items: center;
  height: 13px;
  background: linear-gradient(#8b8b8b, #707070);
  border-top: 1px solid #555;
  border-bottom: 1px solid #ccc;
}
.coords {
  display: flex;
  width: 115px;
  padding-left: 6px;
  font-family: "Liberation Sans", sans-serif;
  font-size: 6px;
}
.coords span:first-child {
  margin-right: 8px;
}
.coords span + span {
  margin-right: 4px;
}
.toggles, .group {
  display: flex;
  align-items: center;
}
.toggles button, .group button {
  width: 11px;
  height: 11px;
  background: #bdbdbd;
}
.toggles button {
  width: 12px;
  border-right: 1px solid #888;
}
.statusbar svg {
  width: 10px;
  height: 10px;
}
.toggles .on {
  background: linear-gradient(#dff5fa, #8fd0e2);
}
.status-right {
  display: flex;
  align-items: center;
  gap: 5px;
  margin-left: auto;
}
.group .text-button {
  width: 14px;
  font-size: 6px;
  font-weight: 700;
}
.group .anno-scale {
  width: 28px;
}
.group.last {
  gap: 2px;
}
.resize {
  width: 8px;
  height: 8px;
  background: radial-gradient(circle, #ddd 1px, transparent 1px) 0 0 / 3px 3px;
  clip-path: polygon(100% 0, 100% 100%, 0 100%);
}

/* logo over the lower right corner */
.watermark {
  position: absolute;
  right: 45px;
  bottom: 15px;
  width: 190px;
  height: 96px;
  stroke: none;
  fill: #fff;
  opacity: .74;
  filter: drop-shadow(0 0 1px #aaa);
  pointer-events: none;
}
.wm-brand {
  font: 700 40px "Liberation Sans", sans-serif;
}
.wm-du {
  font: 700 25px "Liberation Sans", sans-serif;
  fill: #333a42;
}
.wm-cn {
  font: 700 30px "Noto Sans CJK SC", sans-serif;
}
.wm-url {
  font: 400 21px "Noto Sans", sans-serif;
}
```
